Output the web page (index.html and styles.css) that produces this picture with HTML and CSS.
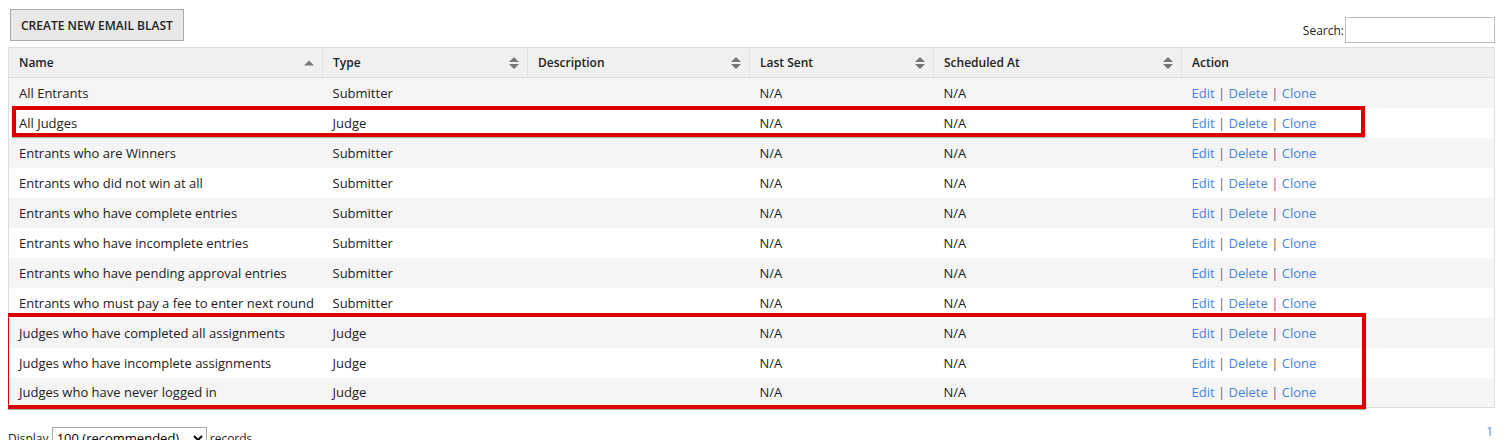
FILE: index.html
```html
<html>
<head>
    <link rel="stylesheet" href="styles.css">
</head>
<body>
    <div class="toolbar">
        <button class="button">CREATE NEW EMAIL BLAST</button>
        <label class="search">Search:<input type="text"></label>
    </div>
    <div class="table-wrap">
        <table class="blasts">
            <thead>
                <tr>
                    <th class="col-name">Name<svg class="sort" width="10" height="12" viewBox="0 0 10 12"><path d="M0 8.5 L5 3.5 L10 8.5 Z"/></svg></th>
                    <th class="col-type">Type<svg class="sort" width="10" height="12" viewBox="0 0 10 12"><path d="M0 5 L5 0 L10 5 Z M0 7 L10 7 L5 12 Z"/></svg></th>
                    <th class="col-desc">Description<svg class="sort" width="10" height="12" viewBox="0 0 10 12"><path d="M0 5 L5 0 L10 5 Z M0 7 L10 7 L5 12 Z"/></svg></th>
                    <th class="col-sent">Last Sent<svg class="sort" width="10" height="12" viewBox="0 0 10 12"><path d="M0 5 L5 0 L10 5 Z M0 7 L10 7 L5 12 Z"/></svg></th>
                    <th class="col-sched">Scheduled At<svg class="sort" width="10" height="12" viewBox="0 0 10 12"><path d="M0 5 L5 0 L10 5 Z M0 7 L10 7 L5 12 Z"/></svg></th>
                    <th>Action</th>
                </tr>
            </thead>
            <tbody id="rows"></tbody>
        </table>
        <!-- annotation boxes drawn over the table -->
        <div class="mark mark-one"></div>
        <div class="mark mark-two"></div>
    </div>
    <div class="footer">
        <div class="display">Display <select><option>100 (recommended)</option></select> records</div>
        <a href="#" class="page">1</a>
    </div>
    <script>
        // List of email blasts to show in the table
        var blasts = [
            ["All Entrants", "Submitter"],
            ["All Judges", "Judge"],
            ["Entrants who are Winners", "Submitter"],
            ["Entrants who did not win at all", "Submitter"],
            ["Entrants who have complete entries", "Submitter"],
            ["Entrants who have incomplete entries", "Submitter"],
            ["Entrants who have pending approval entries", "Submitter"],
            ["Entrants who must pay a fee to enter next round", "Submitter"],
            ["Judges who have completed all assignments", "Judge"],
            ["Judges who have incomplete assignments", "Judge"],
            ["Judges who have never logged in", "Judge"]
        ];
        var body = document.getElementById("rows");
        var html = "";
        for (var i = 0; i < blasts.length; i++) {
            html += "<tr><td>" + blasts[i][0] + "</td><td>" + blasts[i][1] + "</td><td></td>" +
                "<td>N/A</td><td>N/A</td>" +
                "<td><a href='#'>Edit</a> <span class='sep'>|</span> <a href='#'>Delete</a> <span class='sep'>|</span> <a href='#'>Clone</a></td></tr>";
        }
        body.innerHTML = html;
    </script>
</body>
</html>
```

FILE: styles.css
```css
html {
    overflow: hidden;
}

body {
    margin: 8px;
    font-family: "Open Sans", Arial, sans-serif;
    font-size: 13px;
    color: #222;
    background-color: #fff;
}

.toolbar {
    display: flex;
    justify-content: space-between;
    align-items: flex-end;
    height: 34px;
    padding-top: 1px;
    margin-bottom: 4px;
}

.button {
    margin-left: 2px;
    height: 32px;
    padding: 0 10px;
    border: 1px solid #aaa;
    background-color: #e8e8e8;
    font-family: "Open Sans", Arial, sans-serif;
    font-size: 12px;
    font-weight: 600;
    color: #222;
    cursor: pointer;
    align-self: flex-start;
}

.search {
    display: flex;
    align-items: center;
    font-size: 12px;
    margin-right: 9px;
}

.search input {
    width: 150px;
    height: 26px;
    margin-left: 1px;
    border: 1px solid #bbb;
    padding: 2px 4px;
    box-sizing: border-box;
}

.table-wrap {
    position: relative;
    width: 1487px;
}

.blasts {
    width: 100%;
    border-collapse: collapse;
    border: 1px solid #ddd;
    table-layout: fixed;
    font-size: 13px;
    color: #222;
}

.blasts th {
    height: 30px;
    padding: 0 10px;
    background-color: #f0f0f0;
    border-right: 1px solid #e2e2e2;
    border-bottom: 1px solid #ddd;
    text-align: left;
    font-weight: 600;
    font-size: 12px;
    position: relative;
}

.col-name { width: 293px; }
.col-type { width: 184px; }
.col-desc { width: 201px; }
.col-sent { width: 163px; }
.col-sched { width: 227px; }

.sort {
    position: absolute;
    right: 8px;
    top: 9px;
    fill: #777;
}

.blasts td {
    height: 30px;
    padding: 0 10px;
    white-space: nowrap;
}

.blasts tbody tr:nth-child(odd) {
    background-color: #f5f5f5;
}

.blasts a {
    color: #4585dc;
    text-decoration: none;
}

.sep {
    color: #666;
}

.mark {
    position: absolute;
    border: 4px solid #dc0000;
    box-sizing: border-box;
    box-shadow: 0 1px 1px rgba(0, 0, 0, 0.3);
}

.mark-one {
    left: 4px;
    top: 59px;
    width: 1353px;
    height: 31px;
}

.mark-two {
    left: -3px;
    top: 266px;
    width: 1361px;
    height: 96px;
}

.footer {
    display: flex;
    justify-content: space-between;
    align-items: flex-start;
    margin-top: 15px;
    width: 1487px;
}

.display {
    font-size: 12px;
    padding-top: 4px;
}

.display select {
    width: 155px;
    height: 22px;
    font-family: "Open Sans", Arial, sans-serif;
    font-size: 13px;
    border: 1px solid #aaa;
    background-color: #fff;
}

.page {
    color: #5a8fe0;
    text-decoration: none;
    font-size: 12px;
    margin-right: 2px;
}
```
